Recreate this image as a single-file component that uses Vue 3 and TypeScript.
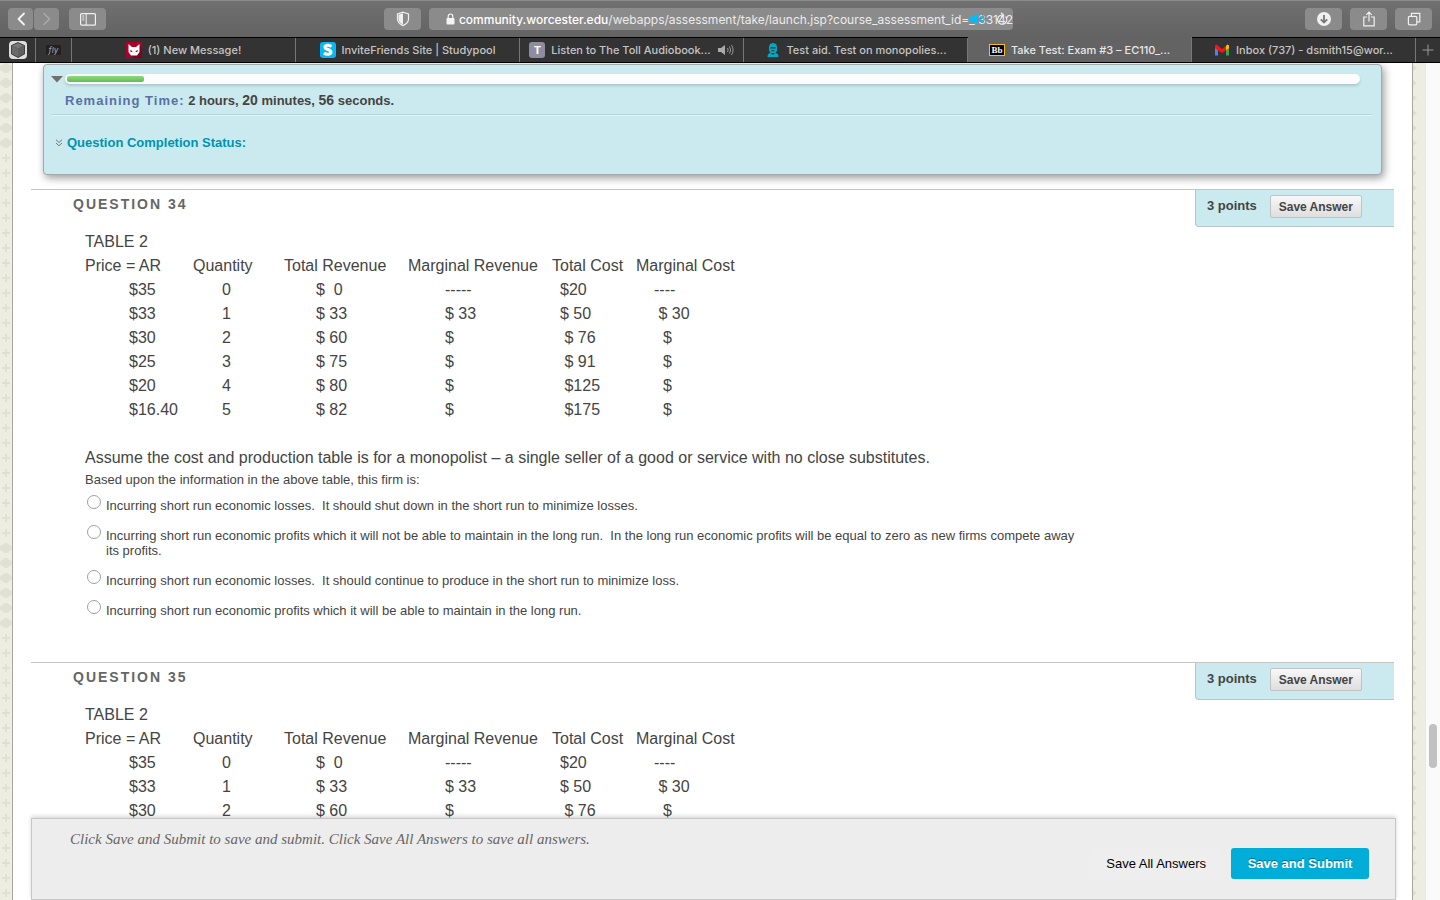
<script setup lang="ts">
import { ref } from 'vue'

interface Question { id: number; number: number; rows: string[][]; lead: string; prompt: string; options: string[]; answer: string }

const host = 'community.worcester.edu'
const path = '/webapps/assessment/take/launch.jsp?course_assessment_id=_133142'

const headings: string[] = ['Price = AR', 'Quantity', 'Total Revenue', 'Marginal Revenue', 'Total Cost', 'Marginal Cost']
const rows: string[][] = [
  ['$35', '0', '$  0', '-----', '$20', '----'],
  ['$33', '1', '$ 33', '$ 33', '$ 50', ' $ 30'],
  ['$30', '2', '$ 60', '$', ' $ 76', '  $'],
  ['$25', '3', '$ 75', '$', ' $ 91', '  $'],
  ['$20', '4', '$ 80', '$', ' $125', '  $'],
  ['$16.40', '5', '$ 82', '$', ' $175', '  $'],
]
const questions = ref<Question[]>([
  {
    id: 1,
    number: 34,
    rows,
    lead: 'Assume the cost and production table is for a monopolist – a single seller of a good or service with no close substitutes.',
    prompt: 'Based upon the information in the above table, this firm is:',
    options: [
      'Incurring short run economic losses.\u00a0 It should shut down in the short run to minimize losses.',
      'Incurring short run economic profits which it will not be able to maintain in the long run.\u00a0 In the long run economic profits will be equal to zero as new firms compete away its profits.',
      'Incurring short run economic losses.\u00a0 It should continue to produce in the short run to minimize loss.',
      'Incurring short run economic profits which it will be able to maintain in the long run.',
    ],
    answer: '',
  },
  { id: 2, number: 35, rows: rows.slice(0, 3), lead: '', prompt: '', options: [], answer: '' },
])
const elapsed = ref(6)
</script>

<template>
  <div class="window">
    <header class="toolbar">
      <div class="group nav">
        <button class="tool small" aria-label="Back"><svg width="12" height="16" viewBox="0 0 12 16"><path d="M9 2.5 3.5 8 9 13.5" fill="none" stroke="#f4f4f4" stroke-width="1.8" stroke-linecap="round" stroke-linejoin="round" /></svg></button>
        <button class="tool small" aria-label="Forward"><svg width="12" height="16" viewBox="0 0 12 16"><path d="M3 2.5 8.5 8 3 13.5" fill="none" stroke="#aaa" stroke-width="1.5" stroke-linecap="round" stroke-linejoin="round" /></svg></button>
        <button class="tool sidebar" aria-label="Show sidebar"><svg width="16" height="13" viewBox="0 0 16 13" fill="none" stroke="#f0f0f0"><rect x="0.6" y="0.6" width="14.8" height="11.6" rx="1" stroke-width="1.2" /><path d="M6.2 0.6v11.6M2.3 3h2M2.3 5h2M2.3 7h2" /></svg></button>
      </div>
      <div class="group address">
        <button class="tool" aria-label="Privacy report"><svg width="14" height="16" viewBox="0 0 14 16"><path d="M7 1.2 12.5 3v5c0 3.2-2.2 5.2-5.5 6.6C3.7 13.2 1.5 11.2 1.5 8V3z" fill="none" stroke="#f0f0f0" stroke-width="1.2" /><path d="M7 2.3v11.3C4.3 12.3 2.5 10.7 2.5 8V3.7z" fill="#f0f0f0" /></svg></button>
        <div class="urlbar">
          <svg width="9" height="12" viewBox="0 0 9 12"><rect x="0.5" y="5" width="8" height="6.5" rx="1" fill="#f4f4f4" /><path d="M2.2 5.5V3.3a2.3 2.3 0 0 1 4.6 0v2.2" fill="none" stroke="#f4f4f4" stroke-width="1.2" /></svg>
          <span class="url"><span class="host">{{ host }}</span>{{ path }}</span>
          <span class="overlay">
            <svg width="18" height="14" viewBox="0 0 18 14"><path d="M1 4.500h3L9 1v12L4 9.500H1z" fill="#00bcff" /><path d="M11.2 4.500q1.700 2.500 0 5M13.5 2.800q3 4.200 0 8.400" fill="none" stroke="#00bcff" stroke-width="1.2" /></svg>
            <svg width="14" height="14" viewBox="0 0 14 14" fill="none" stroke="#eee" stroke-width="1.2"><path d="M10.6 4.500a4.600 4.600 0 1 1-3.600-1.500" /><path d="M6 0.8 8.5 3 6 5.3" /></svg>
          </span>
        </div>
      </div>
      <div class="group actions">
        <button class="tool" aria-label="Downloads"><svg width="16" height="16" viewBox="0 0 16 16"><circle cx="8" cy="8" r="7" fill="#f0f0f0" /><path d="M8 4v7M4.800 8.300 8 11.500l3.200-3.200" fill="none" stroke="#777" stroke-width="1.8" /></svg></button>
        <button class="tool" aria-label="Share"><svg width="14" height="16" viewBox="0 0 14 16" fill="none" stroke="#f0f0f0" stroke-width="1.2"><path d="M5 6H1.800v8.800h10.400V6H9M7 10.500V1.200M4.300 3.800 7 1.100l2.700 2.700" /></svg></button>
        <button class="tool" aria-label="Tab overview"><svg width="14" height="14" viewBox="0 0 14 14" fill="none" stroke="#f0f0f0" stroke-width="1.2"><rect x="1.4" y="4.4" width="8.4" height="8.4" rx="1" /><path d="M4.400 4.200V1.400h8.400v8.400H10" /></svg></button>
      </div>
    </header>

    <nav class="tabs">
      <a href="#" class="pin" aria-label="Pinned site"><svg width="18" height="18" viewBox="0 0 18 18"><rect width="18" height="18" rx="4" fill="#dedede" /><path d="M9 1.500 15.500 4.500v8.500L9 16.500 2.500 13V4.500z" fill="#4a4a4a" /><path d="M9 1.500 15.500 4.500 9 7.500 2.500 4.500z" fill="#787878" /><path d="M9 7.500v9l6.500-3.500V4.500z" fill="#606060" /><path d="M9 7.500v9l-6.500-3.500V4.500z" fill="#6a6a6a" /><path d="M9 1.500 15.500 4.500v8.500L9 16.500 2.500 13V4.500z" fill="none" stroke="#333" stroke-width="0.8" /></svg></a>
      <a href="#" class="pin"><span class="fly">fly</span></a>
      <a href="#" class="tab"><svg width="16" height="16" viewBox="0 0 16 16"><rect width="16" height="16" fill="#b00027" /><path d="m13 3 3 3v10H8l-3-3z" fill="#85001e" /><path d="M2.500 2 6 5h4l3.500-3v8L11 13.500H5L2.500 10z" fill="#fff" /><path d="m4.300 8 2.400 1.300-1 .9-1.400-.6zM11.700 8 9.300 9.300l1 .9 1.400-.6z" fill="#b00027" /></svg><span>(1) New Message!</span></a>
      <a href="#" class="tab"><svg width="16" height="16" viewBox="0 0 16 16"><rect width="16" height="16" rx="3" fill="#08b7f4" /><path d="M11.500 4.500C9 2.500 4.800 3 5 5.300 5.200 7.800 11 7.200 11 10c0 2.600-4.500 3.200-7 1" fill="none" stroke="#fff" stroke-width="3" /></svg><span>InviteFriends Site | Studypool</span></a>
      <a href="#" class="tab"><span class="letter">T</span><span>Listen to The Toll Audiobook...</span><svg width="17" height="12" viewBox="0 0 17 12"><path d="M1 4h3l4-3v10L4 8H1z" fill="#aaa" /><path d="M10.500 4q1.300 2 0 4M12.500 2.500q2.300 3.500 0 7M14.500 1q3.200 5 0 10" fill="none" stroke="#999" /></svg></a>
      <a href="#" class="tab"><svg width="16" height="16" viewBox="0 0 16 16"><path d="M4 4.500 5 2l3-1 3 1 1 2.500v4L10.500 11h-5L4 8.500z" fill="#00a9c6" /><path d="M5.500 5h5v1.500h-5zM6.500 8.300h3v1h-3z" fill="#333" /><path d="M2.500 15c0-3 1.500-4 3-4L8 13l2.500-2c1.500 0 3 1 3 4z" fill="#00a9c6" /></svg><span>Test aid. Test on monopolies...</span></a>
      <a href="#" class="tab active"><span class="bb">Bb</span><span>Take Test: Exam #3 – EC110_...</span></a>
      <a href="#" class="tab"><svg width="16" height="12" viewBox="0 0 16 12"><path d="M1 2v9.500h3V4z" fill="#4285f4" /><path d="M15 2v9.500h-3V4z" fill="#34a853" /><path d="M1 1.500 2.500.5 8 5 13.500.5 15 1.500v2.800L8 9 1 4.300z" fill="#f01818" /><path d="M12 2 13.500.500 15 1.500v2.800l-3 2z" fill="#fbbc04" /></svg><span>Inbox (737) - dsmith15@wor...</span></a>
      <button class="add" aria-label="New tab"><svg width="12" height="12" viewBox="0 0 12 12"><path d="M6 0.500v11M0.500 6h11" stroke="#999" /></svg></button>
    </nav>

    <div class="page">
      <svg class="gutter" width="12" height="100%">
        <defs>
          <pattern id="cross" width="15" height="15" patternUnits="userSpaceOnUse"><path d="M6 1v8M2 5h8" stroke="#e0e0d3" stroke-width="2" /></pattern>
          <pattern id="leaf" width="15" height="15" patternUnits="userSpaceOnUse"><path d="M6 0c2 0 3 1 3 2 2 0 3 1 3 3s-1 3-3 3c0 1-1 2-3 2s-3-1-3-2c-2 0-3-1-3-3s1-3 3-3c0-1 1-2 3-2z" fill="#e0e0d3" /></pattern>
        </defs>
        <rect width="12" height="100%" fill="url(#cross)" />
        <g v-for="top in [0, 480]" :key="top"><rect :y="top" width="12" height="90" fill="#edede1" /><rect :y="top" width="12" height="90" fill="url(#leaf)" /></g>
      </svg>
      <main class="sheet">
        <div class="scroller">
          <section class="timer">
            <div class="progress-line">
              <svg width="12" height="8" viewBox="0 0 12 8"><path d="M0 1h12L6 7.500z" fill="#70706e" /></svg>
              <div class="track" role="progressbar" aria-label="Time used" :aria-valuenow="elapsed"><div class="fill" :style="{ width: elapsed + '%' }"></div></div>
            </div>
            <p class="remaining"><span class="label">Remaining Time:</span> 2 hours, <b>20</b> minutes, <b>56</b> seconds.</p>
            <a href="#" class="status"><svg width="8" height="8" viewBox="0 0 8 8" fill="none" stroke="#777"><path d="M1 0.700 4 3.500 7 0.700M1 4 4 6.800 7 4" /></svg>Question Completion Status:</a>
          </section>

          <section v-for="q in questions" :key="q.id" class="question">
            <header class="question-head">
              <h3>QUESTION {{ q.number }}</h3>
              <div class="points"><span>3 points</span><button class="save">Save Answer</button></div>
            </header>
            <div class="body">
              <table>
                <caption>TABLE 2</caption>
                <thead><tr><th v-for="h in headings" :key="h" scope="col">{{ h }}</th></tr></thead>
                <tbody><tr v-for="(row, r) in q.rows" :key="r"><td v-for="(cell, c) in row" :key="c">{{ cell }}</td></tr></tbody>
              </table>
              <p v-if="q.lead" class="lead">{{ q.lead }}</p>
              <p v-if="q.prompt" class="prompt">{{ q.prompt }}</p>
              <div v-if="q.options.length" class="options">
                <div v-for="(option, i) in q.options" :key="i" class="option">
                  <input :id="`q${q.number}-${i}`" v-model="q.answer" type="radio" :name="`q${q.number}`" :value="String(i)" />
                  <label :for="`q${q.number}-${i}`">{{ option }}</label>
                </div>
              </div>
            </div>
          </section>
        </div>

        <footer class="submit">
          <p>Click Save and Submit to save and submit. Click Save All Answers to save all answers.</p>
          <div class="buttons"><button class="all">Save All Answers</button><button class="primary">Save and Submit</button></div>
        </footer>
      </main>
      <svg class="gutter" width="12" height="100%"><defs><pattern id="edge" width="15" height="15" patternUnits="userSpaceOnUse"><path d="M0 2v6l4-3z" fill="#dfdfd0" /></pattern></defs><rect width="12" height="100%" fill="url(#edge)" /></svg>
      <div class="scrollbar"><div class="thumb"></div></div>
    </div>
  </div>
</template>

<style>
body { margin: 0; }
</style>

<style scoped>
* { box-sizing: border-box; }
p, h3 { margin: 0; }
a { color: inherit; text-decoration: none; }
button { font-family: inherit; margin: 0; cursor: pointer; }
svg { flex: none; }
.window { height: 100vh; display: flex; flex-direction: column; overflow: hidden; font-family: "Liberation Sans", Arial, sans-serif; font-size: 13px; color: #444; }

.toolbar { flex: none; height: 37px; padding: 0 8px; display: grid; grid-template-columns: 376fr 629fr 419fr; align-items: center; background: linear-gradient(#707070, #636363); border-top: 1px solid #8a8a8a; font-family: Inter, sans-serif; }
.group { display: flex; align-items: center; min-width: 0; }
.tool { flex: none; width: 37px; height: 22px; padding: 0; border: 0; border-radius: 4px; background: #8b8b8b; display: flex; align-items: center; justify-content: center; }
.tool.small { width: 25px; }
.nav { gap: 1px; }
.sidebar { margin-left: 9px; }
.address { gap: 8px; }
.urlbar { flex: 1; min-width: 0; height: 22px; border-radius: 4px; background: #8b8b8b; display: flex; align-items: center; justify-content: flex-end; gap: 4px; position: relative; color: #ececec; font-size: 12px; white-space: nowrap; }
.host { color: #fff; font-weight: 500; }
.overlay { position: absolute; right: 4px; top: 4px; display: flex; gap: 8px; }
.actions { justify-content: flex-end; gap: 8px; }

.tabs { flex: none; height: 26px; display: flex; background: #333; border-top: 1px solid #000; border-bottom: 1px solid #000; font-family: Inter, sans-serif; font-size: 11px; font-weight: 500; color: #c4c4c4; }
.pin, .tab { display: flex; align-items: center; justify-content: center; border-right: 1px solid #777; }
.pin { width: 36px; }
.tab { flex: 1; min-width: 0; gap: 6px; white-space: nowrap; }
.tab.active { background: #636363; color: #e8e8e8; margin-top: -1px; padding-top: 1px; }
.fly { background: #241f20; color: #999; font-size: 8px; font-style: italic; padding: 0 3px; line-height: 10px; }
.letter { width: 16px; height: 16px; border-radius: 3px; background: #8e8da0; color: #fff; font-weight: 700; text-align: center; line-height: 16px; }
.bb { width: 16px; height: 12px; border: 1px solid #f5c400; background: #000; color: #fff; font-family: "Liberation Serif", serif; font-size: 9px; font-weight: 700; text-align: center; line-height: 10px; }
.add { width: 24px; padding: 0; border: 0; background: #333; display: flex; align-items: center; justify-content: center; }

.page { flex: 1; min-height: 0; display: flex; background: #edede1; }
.gutter { display: block; }
.sheet { flex: 1; min-width: 0; display: flex; flex-direction: column; padding: 0 16px 0 18px; background: #fff; border: solid #a8a8a0; border-width: 0 1px; }
.scroller { flex: 1; min-height: 0; overflow: hidden; padding-right: 2px; }
.scrollbar { width: 15px; background: #fafafa; border-left: 1px solid #e8e8e8; padding: 661px 3px 0; }
.thumb { width: 8px; height: 44px; border-radius: 4px; background: #c1c1c1; }

.timer { margin: 1px 12px 14px; height: 111px; padding: 9px 9px 0 7px; background: #cbeaef; border: 1px solid #a3a9ab; border-radius: 4px; box-shadow: 2px 3px 8px rgba(0, 0, 0, .4); }
.progress-line { display: flex; align-items: center; gap: 2px; padding-right: 12px; }
.track { flex: 1; height: 10px; padding: 2px; border-radius: 5px; background: #fcfcfc; box-shadow: 0 2px 3px rgba(0, 0, 0, .15); }
.fill { height: 6px; border-radius: 2px; background: linear-gradient(#8edc7c, #66b858); }
.remaining { padding: 8px 0 5px 14px; line-height: 16px; border-bottom: 1px solid #b8d3d7; box-shadow: 0 1px 0 #e2f4f6; font-weight: 700; }
.remaining .label { color: #5a70a4; letter-spacing: 1px; }
.remaining b { font-size: 14px; }
.status { display: inline-flex; align-items: center; gap: 4px; margin: 20px 0 0 4px; line-height: 16px; font-weight: 700; color: #0093ae; }

.question { border-top: 1px solid #c4c4c4; }
.question-head { display: flex; justify-content: space-between; height: 37px; }
.question-head h3 { padding: 6px 0 0 42px; font-size: 14px; line-height: 16px; letter-spacing: 2px; color: #666; }
.points { width: 199px; height: 37px; padding: 5px 0 0 11px; display: flex; align-items: flex-start; gap: 13px; background: #cbeaef; border: solid #b9c6c8; border-width: 0 0 1px 1px; border-radius: 0 0 0 4px; font-weight: 700; }
.points span { line-height: 22px; }
.save { width: 92px; height: 23px; padding: 0; border: 1px solid #c2c2c2; border-radius: 2px; background: linear-gradient(#f8f8f8, #dedede); color: #444; font-size: 12px; font-weight: 700; }
.body { padding: 3px 308px 44px 54px; }
table { border-collapse: collapse; font-size: 16px; line-height: 24px; white-space: pre; table-layout: fixed; width: 671px; }
caption { text-align: left; }
th, td { padding: 0; font-weight: 400; text-align: left; }
th:nth-child(1) { width: 108px; }
th:nth-child(2) { width: 91px; }
th:nth-child(3) { width: 124px; }
th:nth-child(4) { width: 144px; }
th:nth-child(5) { width: 84px; }
td:nth-child(1) { padding-left: 44px; }
td:nth-child(2) { padding-left: 29px; }
td:nth-child(3) { padding-left: 32px; }
td:nth-child(4) { padding-left: 37px; }
td:nth-child(5) { padding-left: 8px; }
td:nth-child(6) { padding-left: 18px; }
.lead { margin-top: 24px; font-size: 16px; line-height: 24px; }
.prompt { margin-top: 2px; line-height: 16px; }
.options { display: flex; flex-direction: column; gap: 15px; margin-top: 10px; }
.option { display: flex; align-items: flex-start; gap: 5px; line-height: 15px; }
.option input { flex: none; appearance: none; width: 14px; height: 14px; margin: -3px 0 0 2px; border: 1px solid #a0a0a0; border-radius: 50%; background: #fff; }
.option input:checked { background: #0093ae; box-shadow: inset 0 0 0 3px #fff; }

.submit { flex: none; height: 82px; padding: 11px 26px 0 38px; background: #ededed; border: 1px solid #c6c6c6; box-shadow: 0 -2px 4px rgba(0, 0, 0, .15); position: relative; }
.submit p { font-family: "Liberation Serif", serif; font-style: italic; font-size: 15px; line-height: 18px; color: #666; }
.buttons { display: flex; justify-content: flex-end; gap: 8px; }
.buttons button { height: 31px; border: 0; border-radius: 3px; font-size: 13px; }
.all { padding: 0 17px; background: #eee; color: #000; }
.primary { width: 138px; background: #00add8; color: #fff; font-weight: 700; text-shadow: 0 -1px 0 rgba(0, 0, 0, .4); }
.buttons .primary { padding: 0; }
</style>
